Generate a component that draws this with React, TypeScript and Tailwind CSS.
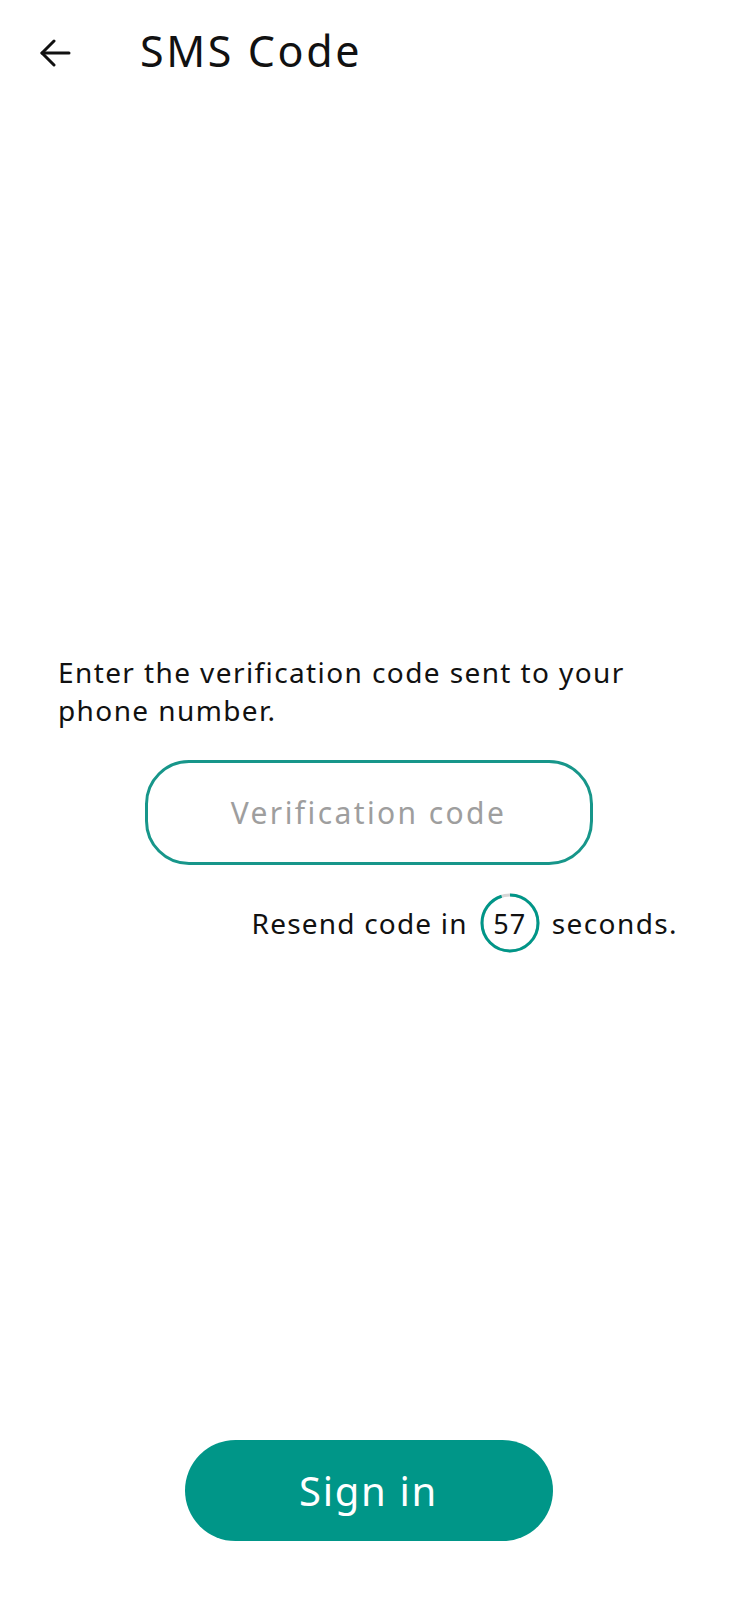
import React from "react";

const font = { fontFamily: '"Noto Sans", "DejaVu Sans", sans-serif' };

const BackArrow = () => (
  <svg width="32" height="28" viewBox="0 0 32 28" fill="none" stroke="#111" strokeWidth="3" strokeLinecap="round" strokeLinejoin="round">
    <path d="M30 14H3" />
    <path d="M15 2L3 14l12 12" />
  </svg>
);

const TimerRing = ({ left, total }: { left: number; total: number }) => {
  const r = 28;
  const c = 2 * Math.PI * r;
  const done = ((total - left) / total) * c;
  return (
    <div className="relative w-[60px] h-[60px] flex items-center justify-center">
      <svg className="absolute inset-0" width="60" height="60" viewBox="0 0 60 60">
        <circle cx="30" cy="30" r={r} fill="none" stroke="#d6d6d6" strokeWidth="3" />
        <circle
          cx="30"
          cy="30"
          r={r}
          fill="none"
          stroke="#009688"
          strokeWidth="3"
          strokeDasharray={`${c - done} ${c}`}
          transform="rotate(-90 30 30)"
        />
      </svg>
      <span className="text-[27px] tracking-[1px] text-[#111] leading-none">{left}</span>
    </div>
  );
};

export default function App() {
  return (
    <div className="min-h-[1600px] w-full bg-white flex flex-col" style={font}>
      <header className="flex items-center h-[106px] pl-[39px]">
        <button className="w-[32px] h-[28px] flex items-center">
          <BackArrow />
        </button>
        <h1 className="ml-[69px] mb-[5px] text-[43px] tracking-[2.6px] text-[#111] leading-none">SMS Code</h1>
      </header>

      <main className="flex flex-col px-[58px] pt-[547px]">
        <p className="text-[28px] tracking-[1.4px] leading-[38px] text-[#111]">
          Enter the verification code sent to your phone number.
        </p>

        <div className="mt-[31px] flex justify-center">
          <input
            className="w-[448px] h-[105px] rounded-[44px] border-[3px] border-[#17968a] text-center text-[30px] tracking-[2.4px] text-[#111] placeholder:text-[#9e9e9e] outline-none"
            placeholder="Verification code"
          />
        </div>

        <div className="mt-[28px] flex items-center justify-end gap-[12px] pr-[1px]">
          <span className="text-[28px] tracking-[1.2px] text-[#111]">Resend code in</span>
          <TimerRing left={57} total={60} />
          <span className="text-[28px] tracking-[1.4px] text-[#111]">seconds.</span>
        </div>
      </main>

      <div className="mt-auto mb-[59px] flex justify-center">
        <button className="w-[368px] h-[101px] rounded-full bg-[#009688] text-white text-[40px] tracking-[1.7px]">
          Sign in
        </button>
      </div>
    </div>
  );
}
